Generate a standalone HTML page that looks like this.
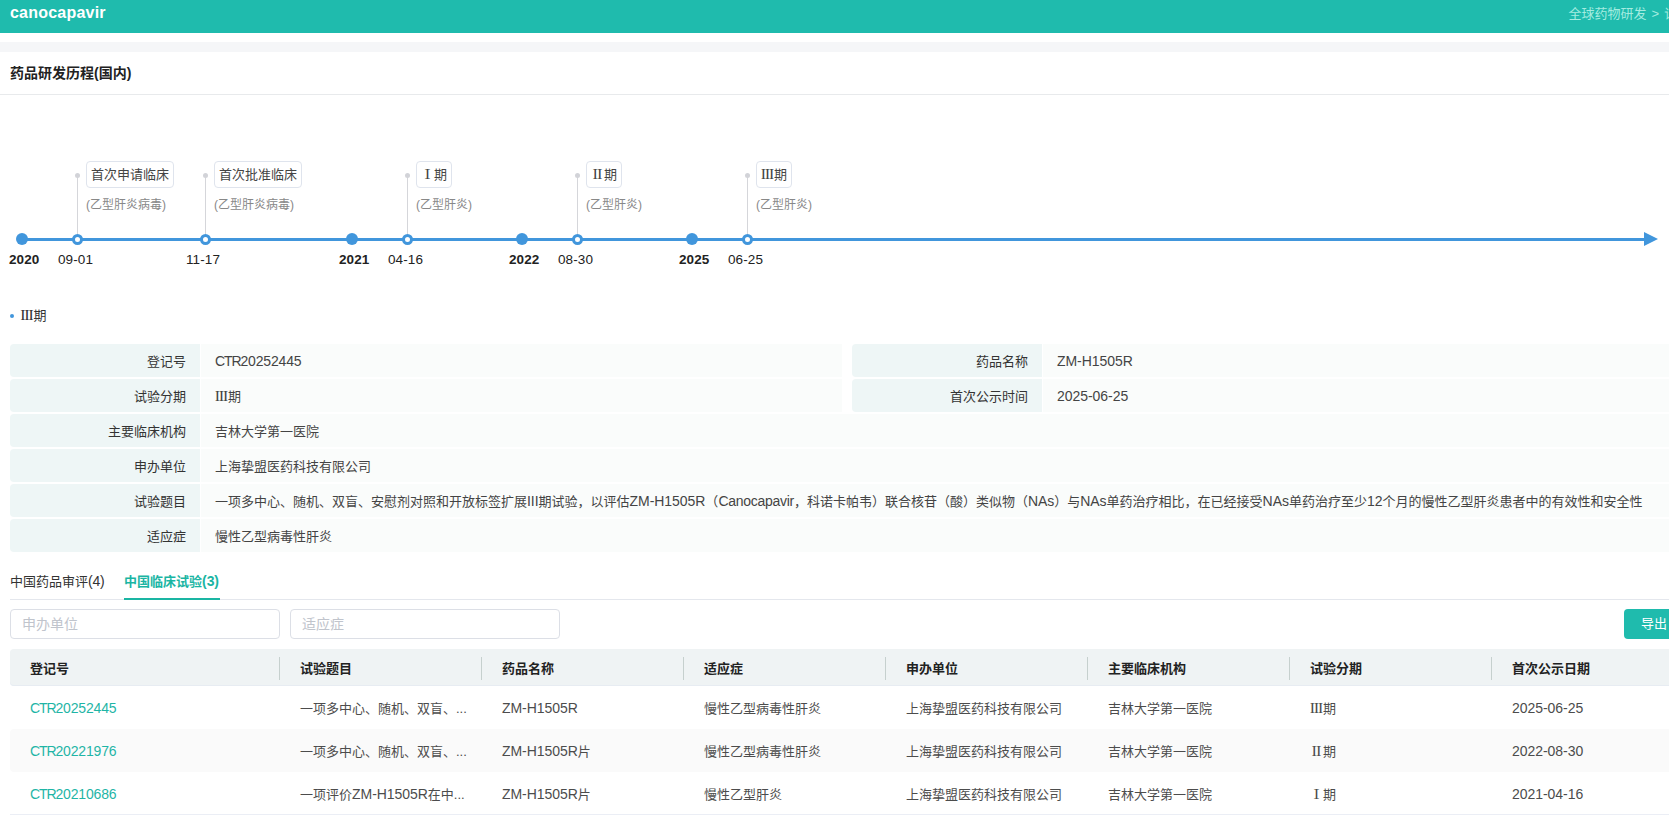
<!DOCTYPE html>
<html lang="zh-CN">
<head>
<meta charset="utf-8">
<title>canocapavir</title>
<style>
*{box-sizing:border-box;margin:0;padding:0}
html,body{width:1669px;height:821px;overflow:hidden;background:#fff}
body{font-family:"Liberation Sans","Noto Sans CJK SC",sans-serif;font-size:13px;color:#333;position:relative}
.page{position:absolute;left:0;top:0;width:1694px;height:821px}
.topbar{position:absolute;left:0;top:0;width:1694px;height:33px;background:#1fbbad}
.topbar h1{position:absolute;left:10px;top:3px;font-size:16px;line-height:20px;font-weight:bold;color:#fff;letter-spacing:.22px}
.crumb{position:absolute;left:1568.5px;top:5px;font-size:13px;line-height:18px;color:#a4ece0;white-space:nowrap;word-spacing:1.5px}
.graybar{position:absolute;left:0;top:42px;width:1694px;height:10px;background:#f5f6f8}
.sect-title{position:absolute;left:10px;top:62px;font-size:14px;line-height:22px;font-weight:bold;color:#222}
.sect-line{position:absolute;left:0;top:94px;width:1694px;height:1px;background:#e8eaec}

/* timeline */
.tl{position:absolute;left:0;top:100px;width:1694px;height:190px}
.tl .axis{position:absolute;left:22px;top:138px;width:1624px;height:3px;background:#4196dc}
.tl .arrow{position:absolute;left:1644px;top:132px;width:0;height:0;border-left:14px solid #4196dc;border-top:7px solid transparent;border-bottom:7px solid transparent}
.tl .year{position:absolute;top:133px;width:12px;height:12px;border-radius:50%;background:#4196dc}
.tl .node{position:absolute;top:134px;width:11px;height:11px;border-radius:50%;background:#fff;border:3px solid #4196dc}
.tl .stem{position:absolute;top:75px;width:1px;height:59px;background:#d5d6da}
.tl .pin{position:absolute;top:73px;width:5px;height:5px;border-radius:50%;background:#d2d3d8}
.tl .tag{position:absolute;top:61px;height:27px;line-height:26.5px;padding:0 4px;border:1px solid #dfe4ed;border-radius:4px;font-size:13px;color:#444;background:#fff;white-space:nowrap}
.tl .sub{position:absolute;top:96px;font-size:12px;line-height:18px;color:#888;white-space:nowrap}
.tl .ylab{position:absolute;top:151px;font-size:13.5px;line-height:18px;font-weight:bold;color:#222;white-space:nowrap;letter-spacing:.1px}
.tl .dlab{position:absolute;top:151px;font-size:13.5px;line-height:18px;color:#222;white-space:nowrap;letter-spacing:.1px}

.phase{position:absolute;left:20.5px;top:306px;font-size:13px;line-height:20px;color:#333}
.phase:before{content:"";position:absolute;left:-10.5px;top:8px;width:4px;height:4px;border-radius:50%;background:#4196dc}

/* info grid */
.info{position:absolute;left:10px;top:344px;width:1674px}
.info .row{position:absolute;left:0;height:33px;width:1674px}
.info .cell{position:absolute;top:0;height:33px;display:flex}
.info .k{width:190px;height:33px;line-height:35px;background:#eef6f6;border-radius:4px 0 0 4px;text-align:right;padding-right:14px;margin-right:1px;color:#333;white-space:nowrap}
.info .v{flex:1;height:33px;line-height:35px;background:#fafcfb;padding-left:14px;color:#444;white-space:nowrap;overflow:hidden}

/* tabs */
.tabs{position:absolute;left:10px;top:565px;width:1684px;height:35px;border-bottom:1px solid #e4e7ed}
.tabs .tab{position:absolute;top:7px;font-size:13px;line-height:20px;color:#333;white-space:nowrap}
.tabs .tab.on{color:#1ab5a3;font-weight:bold}
.tabs .bar{position:absolute;left:114px;top:33px;width:96px;height:2px;background:#1ab5a3}

.inp{position:absolute;top:609px;width:270px;height:30px;border:1px solid #dcdfe6;border-radius:4px;background:#fff;font-size:14px;line-height:28px;color:#c0c4cc;padding-left:11px}
.btn{position:absolute;left:1624px;top:609px;width:60px;height:30px;border-radius:4px;background:#1fbbad;color:#fff;font-size:13px;line-height:30px;padding-left:17px;white-space:nowrap}

/* table */
.tbl{position:absolute;left:10px;top:649px;width:1684px}
.tbl .hd{position:absolute;left:0;top:0;width:1684px;height:37px;background:#eff3f4;border-radius:4px 0 0 4px;box-shadow:inset 0 -1px 0 #e7ecf2}
.tbl .th{position:absolute;top:1px;height:37px;line-height:38px;font-weight:bold;color:#222;padding-left:20px;white-space:nowrap}
.tbl .sep{position:absolute;top:8px;width:1px;height:23px;background:#c6d0ce}
.tbl .tr{position:absolute;left:0;width:1684px;height:43px}
.tbl .tr.alt{background:#fafafa;border-radius:4px 0 0 4px}
.tbl .td{position:absolute;top:0;height:43px;line-height:45px;color:#4c4c4c;padding-left:20px;white-space:nowrap;overflow:hidden}
.tbl .td a{color:#1fb5a6;text-decoration:none}
.tbl .end{position:absolute;left:0;top:165px;width:1684px;height:1px;background:#ebeef5}
.rn{font-family:"Liberation Serif","Noto Serif CJK SC",serif;font-weight:600;line-height:0}
.c,.n,.z,.lc{font-size:14px;line-height:0}.c{letter-spacing:-1.1px}.n{letter-spacing:-.16px}.z{letter-spacing:-.05px}.lc{letter-spacing:-.28px}
</style>
</head>
<body>
<div class="page">
  <div class="topbar">
    <h1>canocapavir</h1>
    <div class="crumb">全球药物研发 &gt; 详情</div>
  </div>
  <div class="graybar"></div>
  <div class="sect-title">药品研发历程(国内)</div>
  <div class="sect-line"></div>

  <div class="tl">
    <div class="axis"></div>
    <div class="arrow"></div>

    <div class="year" style="left:16px"></div>
    <div class="year" style="left:346px"></div>
    <div class="year" style="left:516px"></div>
    <div class="year" style="left:686px"></div>

    <div class="stem" style="left:77px"></div><div class="pin" style="left:75px"></div>
    <div class="stem" style="left:205px"></div><div class="pin" style="left:203px"></div>
    <div class="stem" style="left:407px"></div><div class="pin" style="left:405px"></div>
    <div class="stem" style="left:577px"></div><div class="pin" style="left:575px"></div>
    <div class="stem" style="left:747px"></div><div class="pin" style="left:745px"></div>

    <div class="node" style="left:72px"></div>
    <div class="node" style="left:200px"></div>
    <div class="node" style="left:402px"></div>
    <div class="node" style="left:572px"></div>
    <div class="node" style="left:742px"></div>

    <div class="tag" style="left:86px">首次申请临床</div>
    <div class="tag" style="left:214px">首次批准临床</div>
    <div class="tag" style="left:416px"><span class="rn">Ⅰ</span>期</div>
    <div class="tag" style="left:586px"><span class="rn">Ⅱ</span>期</div>
    <div class="tag" style="left:756px"><span class="rn">Ⅲ</span>期</div>

    <div class="sub" style="left:86px">(乙型肝炎病毒)</div>
    <div class="sub" style="left:214px">(乙型肝炎病毒)</div>
    <div class="sub" style="left:416px">(乙型肝炎)</div>
    <div class="sub" style="left:586px">(乙型肝炎)</div>
    <div class="sub" style="left:756px">(乙型肝炎)</div>

    <div class="ylab" style="left:9px">2020</div>
    <div class="dlab" style="left:58px">09-01</div>
    <div class="dlab" style="left:186px">11-17</div>
    <div class="ylab" style="left:339px">2021</div>
    <div class="dlab" style="left:388px">04-16</div>
    <div class="ylab" style="left:509px">2022</div>
    <div class="dlab" style="left:558px">08-30</div>
    <div class="ylab" style="left:679px">2025</div>
    <div class="dlab" style="left:728px">06-25</div>
  </div>

  <div class="phase"><span class="rn">Ⅲ</span>期</div>

  <div class="info">
    <div class="row" style="top:0">
      <div class="cell" style="left:0;width:832px"><div class="k">登记号</div><div class="v"><span class="c">CTR</span><span class="n">20252445</span></div></div>
      <div class="cell" style="left:842px;width:832px"><div class="k">药品名称</div><div class="v"><span class="z">ZM-H1505R</span></div></div>
    </div>
    <div class="row" style="top:35px">
      <div class="cell" style="left:0;width:832px"><div class="k">试验分期</div><div class="v"><span class="rn">Ⅲ</span>期</div></div>
      <div class="cell" style="left:842px;width:832px"><div class="k">首次公示时间</div><div class="v"><span class="z">2025-06-25</span></div></div>
    </div>
    <div class="row" style="top:70px">
      <div class="cell" style="left:0;width:1674px"><div class="k">主要临床机构</div><div class="v">吉林大学第一医院</div></div>
    </div>
    <div class="row" style="top:105px">
      <div class="cell" style="left:0;width:1674px"><div class="k">申办单位</div><div class="v">上海挚盟医药科技有限公司</div></div>
    </div>
    <div class="row" style="top:140px">
      <div class="cell" style="left:0;width:1674px"><div class="k">试验题目</div><div class="v">一项多中心、随机、双盲、安慰剂对照和开放标签扩展<span class="z">III</span>期试验，以评估<span class="z">ZM-H1505R</span>（<span class="lc">Canocapavir</span>，科诺卡帕韦）联合核苷（酸）类似物（<span class="z">NAs</span>）与<span class="z">NAs</span>单药治疗相比，在已经接受<span class="z">NAs</span>单药治疗至少<span class="z">12</span>个月的慢性乙型肝炎患者中的有效性和安全性</div></div>
    </div>
    <div class="row" style="top:175px">
      <div class="cell" style="left:0;width:1674px"><div class="k">适应症</div><div class="v">慢性乙型病毒性肝炎</div></div>
    </div>
  </div>

  <div class="tabs">
    <div class="tab" style="left:0">中国药品审评<span class="lc">(4)</span></div>
    <div class="tab on" style="left:114px">中国临床试验<span class="z">(3)</span></div>
    <div class="bar"></div>
  </div>

  <div class="inp" style="left:10px">申办单位</div>
  <div class="inp" style="left:290px">适应症</div>
  <div class="btn">导出</div>

  <div class="tbl">
    <div class="hd">
      <div class="th" style="left:0">登记号</div>
      <div class="th" style="left:270px">试验题目</div>
      <div class="th" style="left:472px">药品名称</div>
      <div class="th" style="left:674px">适应症</div>
      <div class="th" style="left:876px">申办单位</div>
      <div class="th" style="left:1078px">主要临床机构</div>
      <div class="th" style="left:1280px">试验分期</div>
      <div class="th" style="left:1482px">首次公示日期</div>
      <div class="sep" style="left:269px"></div>
      <div class="sep" style="left:471px"></div>
      <div class="sep" style="left:673px"></div>
      <div class="sep" style="left:875px"></div>
      <div class="sep" style="left:1077px"></div>
      <div class="sep" style="left:1279px"></div>
      <div class="sep" style="left:1481px"></div>
    </div>
    <div class="tr" style="top:37px">
      <div class="td" style="left:0;width:270px"><a><span class="c">CTR</span><span class="n">20252445</span></a></div>
      <div class="td" style="left:270px;width:202px">一项多中心、随机、双盲、...</div>
      <div class="td" style="left:472px;width:202px"><span class="z">ZM-H1505R</span></div>
      <div class="td" style="left:674px;width:202px">慢性乙型病毒性肝炎</div>
      <div class="td" style="left:876px;width:202px">上海挚盟医药科技有限公司</div>
      <div class="td" style="left:1078px;width:202px">吉林大学第一医院</div>
      <div class="td" style="left:1280px;width:202px"><span class="rn">Ⅲ</span>期</div>
      <div class="td" style="left:1482px;width:202px"><span class="z">2025-06-25</span></div>
    </div>
    <div class="tr alt" style="top:80px">
      <div class="td" style="left:0;width:270px"><a><span class="c">CTR</span><span class="n">20221976</span></a></div>
      <div class="td" style="left:270px;width:202px">一项多中心、随机、双盲、...</div>
      <div class="td" style="left:472px;width:202px"><span class="z">ZM-H1505R</span>片</div>
      <div class="td" style="left:674px;width:202px">慢性乙型病毒性肝炎</div>
      <div class="td" style="left:876px;width:202px">上海挚盟医药科技有限公司</div>
      <div class="td" style="left:1078px;width:202px">吉林大学第一医院</div>
      <div class="td" style="left:1280px;width:202px"><span class="rn">Ⅱ</span>期</div>
      <div class="td" style="left:1482px;width:202px"><span class="z">2022-08-30</span></div>
    </div>
    <div class="tr" style="top:123px">
      <div class="td" style="left:0;width:270px"><a><span class="c">CTR</span><span class="n">20210686</span></a></div>
      <div class="td" style="left:270px;width:202px">一项评价<span class="z">ZM-H1505R</span>在中...</div>
      <div class="td" style="left:472px;width:202px"><span class="z">ZM-H1505R</span>片</div>
      <div class="td" style="left:674px;width:202px">慢性乙型肝炎</div>
      <div class="td" style="left:876px;width:202px">上海挚盟医药科技有限公司</div>
      <div class="td" style="left:1078px;width:202px">吉林大学第一医院</div>
      <div class="td" style="left:1280px;width:202px"><span class="rn">Ⅰ</span>期</div>
      <div class="td" style="left:1482px;width:202px"><span class="z">2021-04-16</span></div>
    </div>
    <div class="end"></div>
  </div>
</div>
</body>
</html>
